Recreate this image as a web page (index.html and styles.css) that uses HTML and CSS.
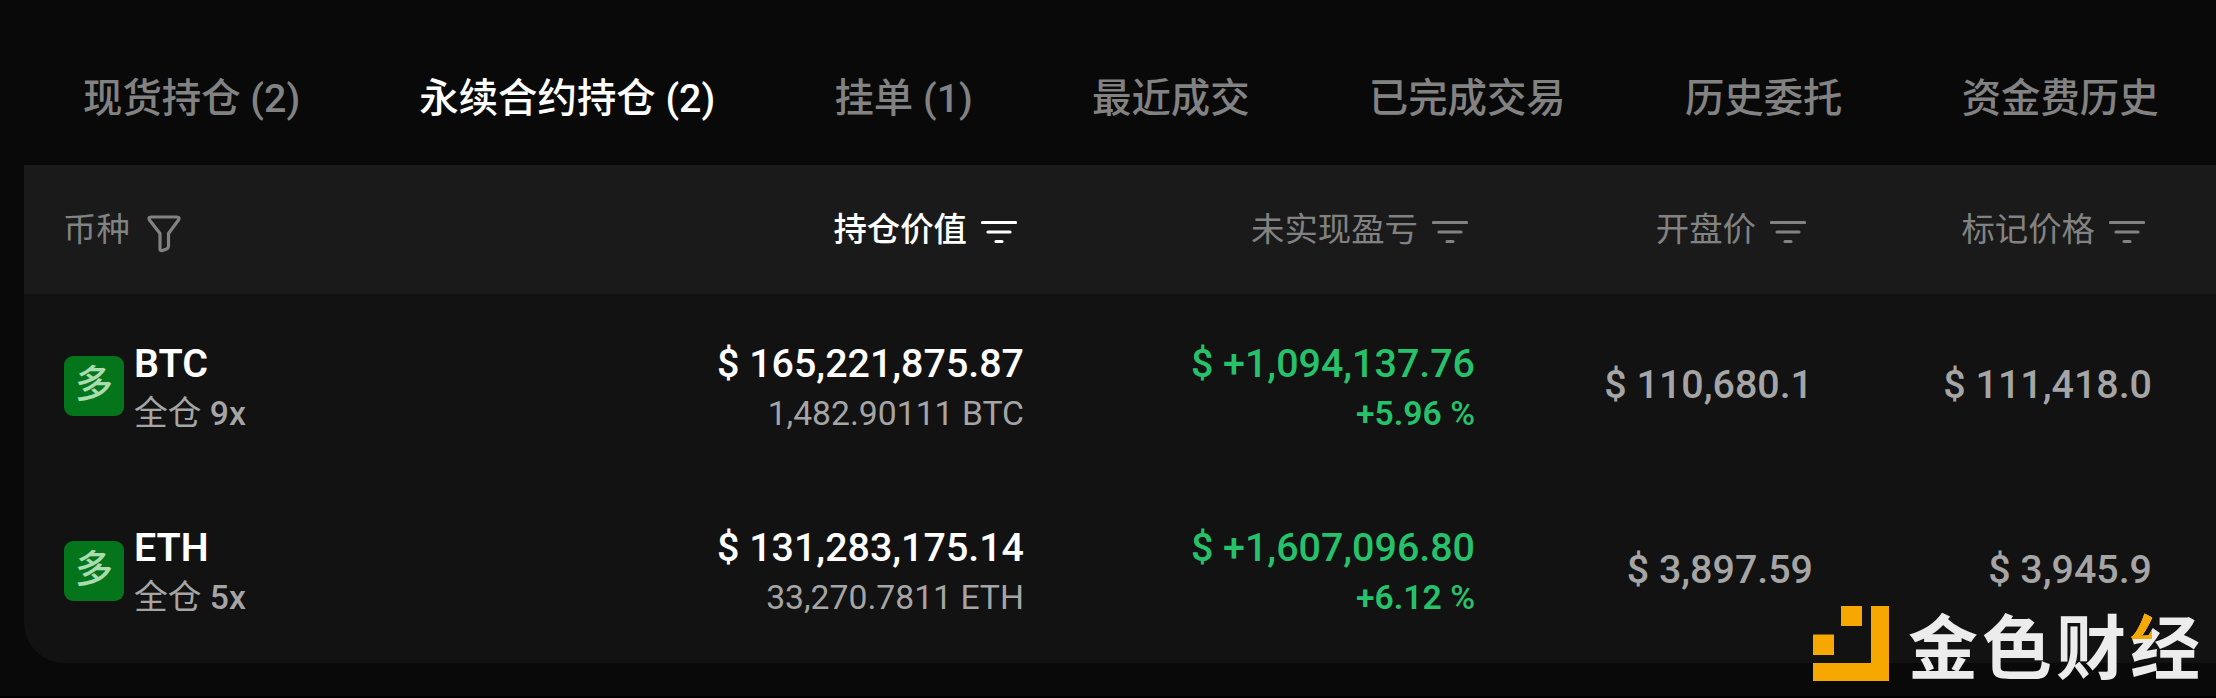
FILE: index.html
```html
<!DOCTYPE html>
<html lang="zh-CN">
  <head>
    <meta charset="UTF-8" />
    <meta name="viewport" content="width=device-width, initial-scale=1.0" />
    <title>永续合约持仓</title>
    <link rel="stylesheet" href="styles.css">
  </head>
  <body>
    <nav class="tabs">
      <a class="tab">现货持仓 (2)</a>
      <a class="tab active">永续合约持仓 (2)</a>
      <a class="tab">挂单 (1)</a>
      <a class="tab">最近成交</a>
      <a class="tab">已完成交易</a>
      <a class="tab">历史委托</a>
      <a class="tab">资金费历史</a>
    </nav>

    <main class="panel">
      <div class="row head">
        <div class="coin-head">
          <span>币种</span>
          <svg class="filter" viewBox="0 0 34 38"><path d="M4 2H30Q33 2 31.500 5L21.500 18.500V31Q21.500 33 19.500 34L15.500 35.500Q13 36 13 34V18.500L2.500 5Q1 2 4 2Z" /></svg>
        </div>
        <div class="sort active"><span>持仓价值</span><svg viewBox="0 0 36 24"><path d="M1.500 2.500H34.500M7 12H29M15 21.500H21" /></svg></div>
        <div class="sort"><span>未实现盈亏</span><svg viewBox="0 0 36 24"><path d="M1.500 2.500H34.500M7 12H29M15 21.500H21" /></svg></div>
        <div class="sort"><span>开盘价</span><svg viewBox="0 0 36 24"><path d="M1.500 2.500H34.500M7 12H29M15 21.500H21" /></svg></div>
        <div class="sort"><span>标记价格</span><svg viewBox="0 0 36 24"><path d="M1.500 2.500H34.500M7 12H29M15 21.500H21" /></svg></div>
      </div>

      <div class="row">
        <div class="coin">
          <span class="side">多</span>
          <div class="stack">
            <div class="symbol">BTC</div>
            <div class="sub">全仓 <span class="lever">9x</span></div>
          </div>
        </div>
        <div class="cell stack">
          <div class="value">$ 165,221,875.87</div>
          <div class="sub">1,482.90111 BTC</div>
        </div>
        <div class="cell stack up">
          <div>$ +1,094,137.76</div>
          <div class="sub percent">+5.96 <span class="unit">%</span></div>
        </div>
        <div class="cell price">$ 110,680.1</div>
        <div class="cell price">$ 111,418.0</div>
      </div>

      <div class="row">
        <div class="coin">
          <span class="side">多</span>
          <div class="stack">
            <div class="symbol">ETH</div>
            <div class="sub">全仓 <span class="lever">5x</span></div>
          </div>
        </div>
        <div class="cell stack">
          <div class="value">$ 131,283,175.14</div>
          <div class="sub">33,270.7811 ETH</div>
        </div>
        <div class="cell stack up">
          <div>$ +1,607,096.80</div>
          <div class="sub percent">+6.12 <span class="unit">%</span></div>
        </div>
        <div class="cell price">$ 3,897.59</div>
        <div class="cell price">$ 3,945.9</div>
      </div>
    </main>

    <div class="brand">
      <svg viewBox="0 0 76 75"><path d="M0 28.500H21V49H0ZM28 0H49V20H28ZM58 0H76V75H0V57H58Z" /></svg>
      <span class="brand-name">金色财<span class="accent">经</span></span>
    </div>
  </body>
</html>
```

FILE: styles.css
```css
* {
  box-sizing: border-box;
}

body {
  margin: 0;
  height: 698px;
  overflow: hidden;
  position: relative;
  background: #090909;
  border-bottom: 2px solid #000;
  font-family: Roboto, "Noto Sans CJK SC", sans-serif;
  font-size: 39.4px;
  color: #828282;
}

.tabs {
  display: flex;
  gap: 119.2px;
  height: 165px;
  padding: 69px 0 0 83px;
  line-height: 60px;
  font-weight: 500;
  white-space: nowrap;
}

.tab.active {
  color: #fff;
}

.panel {
  margin-left: 24px;
  background: #121212;
  border-bottom-left-radius: 40px;
  overflow: hidden;
}

.row {
  display: grid;
  grid-template-columns: 509px 451px 451px 338px 339px;
  align-items: center;
  height: 184.5px;
  padding-left: 40px;
  line-height: 50px;
  white-space: nowrap;
}

.head {
  height: 129px;
  background: #1a1a1a;
  font-size: 33.4px;
  color: #828282;
}

.coin-head {
  display: flex;
  align-items: center;
  gap: 17px;
  margin-left: -1px;
}

.head span {
  padding-top: 1px;
}

.filter {
  width: 34px;
  height: 38px;
  margin-top: 8px;
}

.row svg {
  fill: none;
  stroke: currentColor;
  stroke-width: 3.2;
  stroke-linecap: round;
  stroke-linejoin: round;
}

.sort {
  display: flex;
  align-items: center;
  justify-content: flex-end;
  gap: 14px;
  padding-right: 7px;
}

.sort svg {
  width: 36px;
  height: 24px;
  margin-top: 5px;
}

.sort.active {
  color: #fff;
  font-weight: 500;
}

.coin {
  display: flex;
  align-items: center;
  gap: 10px;
}

.stack {
  padding-top: 5px;
}

.side {
  width: 60px;
  height: 60px;
  border-radius: 9px;
  background: #04751a;
  color: #a9dcae;
  font-size: 38px;
  font-weight: 500;
  line-height: 57px;
  text-align: center;
}

.symbol {
  color: #fff;
  font-weight: 600;
}

.sub {
  font-size: 33.7px;
  font-weight: 400;
  color: #a5a5a5;
}

.lever {
  font-weight: 500;
}

.cell {
  font-weight: 500;
  text-align: right;
}

.value {
  color: #fff;
}

.price {
  padding-bottom: 2px;
  color: #a5a5a5;
}

.up,
.up .sub {
  color: #26c26b;
}

.percent {
  font-weight: 600;
}

.unit {
  font-weight: 500;
}

.brand {
  position: absolute;
  left: 1813px;
  top: 606px;
  display: flex;
  align-items: center;
  gap: 19px;
}

.brand svg {
  width: 76px;
  height: 75px;
  fill: #f7a800;
}

.brand-name {
  font-family: "Noto Sans CJK SC", sans-serif;
  font-size: 70px;
  font-weight: 700;
  letter-spacing: 4px;
  line-height: 75px;
  color: #ececec;
}

/* first stroke of the last character takes the brand colour */
.accent {
  background: linear-gradient(#f7a800, #f7a800) 0 0 / 22px 46px no-repeat, #ececec;
  -webkit-background-clip: text;
  background-clip: text;
  color: transparent;
}
```
